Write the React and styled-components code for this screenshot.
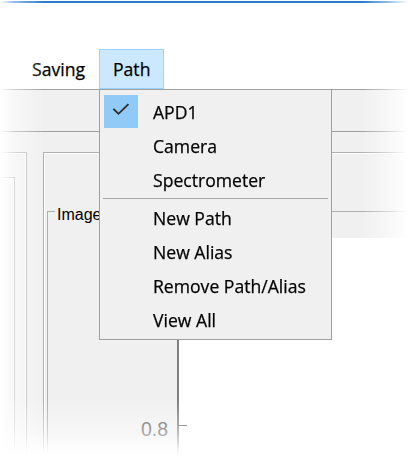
import React from 'react';
import styled, { createGlobalStyle } from 'styled-components';

const Global = createGlobalStyle`
  html, body { margin: 0; padding: 0; background: #ffffff; }
  body { width: 415px; height: 456px; overflow: hidden; }
`;

const FadeX = styled.div`
  width: 415px;
  height: 456px;
  overflow: hidden;
  -webkit-mask-image: linear-gradient(to right, transparent 0, rgba(0,0,0,0.5) 14px, #000 44px, #000 362px, rgba(0,0,0,0.5) 388px, transparent 408px);
  mask-image: linear-gradient(to right, transparent 0, rgba(0,0,0,0.5) 14px, #000 44px, #000 362px, rgba(0,0,0,0.5) 388px, transparent 408px);
`;

const FadeY = styled.div`
  height: 100%;
  display: flex;
  flex-direction: column;
  -webkit-mask-image: linear-gradient(to bottom, #000 0, #000 402px, rgba(0,0,0,0.55) 432px, transparent 454px);
  mask-image: linear-gradient(to bottom, #000 0, #000 402px, rgba(0,0,0,0.55) 432px, transparent 454px);
`;

const TopEdge = styled.div`
  height: 2px;
  margin-top: 1px;
  background: #2a7bd3;
  flex: none;
`;

const TitleArea = styled.div`
  height: 46px;
  flex: none;
  background: #fff;
`;

const MenuBar = styled.div`
  height: 40px;
  flex: none;
  display: flex;
  padding-left: 18px;
  background: #fff;
  font-family: "Open Sans", "Noto Sans", sans-serif;
  font-size: 17.6px;
  color: #000;
  -webkit-text-stroke: 0.25px #000;
  position: relative;
  z-index: 5;
`;

const MenuItem = styled.div`
  position: relative;
  box-sizing: border-box;
  height: 40px;
  padding: 0 13px;
  display: flex;
  align-items: center;
  border: 1px solid ${p => (p.$open ? '#99d1ff' : 'transparent')};
  background: ${p => (p.$open ? '#cce8ff' : 'transparent')};
  white-space: nowrap;
`;

const Dropdown = styled.div`
  position: absolute;
  top: calc(100% + 1px);
  left: -1px;
  width: 233px;
  box-sizing: border-box;
  border: 1px solid #a0a0a0;
  background: #f0f0f0;
  padding: 5px 2px 2px 2px;
  display: flex;
  flex-direction: column;
`;

const DropItem = styled.div`
  height: 34px;
  display: flex;
  align-items: center;
`;

const CheckCell = styled.div`
  width: 34px;
  height: 33px;
  margin-left: 2px;
  align-self: flex-start;
  background: ${p => (p.$on ? '#91c9f7' : 'transparent')};
  display: flex;
  flex: none;
`;

const ItemLabel = styled.span`
  margin-left: 15px;
`;

const Separator = styled.div`
  height: 4px;
  box-sizing: border-box;
  margin: 0 1px;
  padding-top: 1px;
  &::before {
    content: '';
    display: block;
    height: 1px;
    background: #a8a8a8;
  }
`;

const Toolbar = styled.div`
  height: 41px;
  flex: none;
  border-top: 1px solid #a0a0a0;
  border-bottom: 1px solid #a0a0a0;
  background: #f0f0f0;
`;

const TabStrip = styled.div`
  height: 20px;
  flex: none;
  background: #f0f0f0;
`;

const Workspace = styled.div`
  flex: 1;
  display: flex;
  background: #f0f0f0;
  min-height: 0;
`;

const SidePanel = styled.div`
  width: 26px;
  flex: none;
  border-top: 1px solid #b4b4b4;
  border-right: 1px solid #b4b4b4;
  box-shadow: inset -1px 1px 0 #fff;
  padding-top: 24px;
  display: flex;
`;

const InnerSide = styled.div`
  width: 14px;
  border-top: 1px solid #b4b4b4;
  border-right: 1px solid #b4b4b4;
  box-shadow: inset -1px 1px 0 #fff;
`;

const MainPanel = styled.div`
  flex: 1;
  margin-left: 16px;
  border-top: 1px solid #b0b0b0;
  border-left: 1px solid #b0b0b0;
  box-shadow: inset 1px 1px 0 #fff;
  padding: 46px 0 0 3px;
  display: flex;
  min-width: 0;
`;

const GroupBox = styled.fieldset`
  flex: 1;
  margin: 0;
  padding: 0;
  min-width: 0;
  border: 0;
  border-top: 1px solid #b0b0b0;
  border-left: 1px solid #b0b0b0;
`;

const Legend = styled.legend`
  margin-left: 7px;
  padding: 7px 2px 0;
  font-family: "Liberation Sans", Arial, sans-serif;
  font-size: 16px;
  line-height: 18px;
  color: #000;
`;

const Plot = styled.svg`
  display: block;
  margin-top: 14px;
  width: 100%;
  height: 230px;
`;

const pathItems = ['New Path', 'New Alias', 'Remove Path/Alias', 'View All'];
const devices = ['APD1', 'Camera', 'Spectrometer'];

export default function App() {
  return (
    <>
      <Global />
      <FadeX>
        <FadeY>
          <TopEdge />
          <TitleArea />
          <MenuBar>
            <MenuItem>Saving</MenuItem>
            <MenuItem $open>
              Path
              <Dropdown>
                {devices.map((d, i) => (
                  <DropItem key={d}>
                    <CheckCell $on={i === 0}>
                      {i === 0 && (
                        <svg width="34" height="33" viewBox="0 0 34 33">
                          <polyline points="10,14.5 14.5,18.8 23.8,9.8" fill="none" stroke="#2b2b2b" strokeWidth="1.8" strokeLinecap="square" />
                        </svg>
                      )}
                    </CheckCell>
                    <ItemLabel>{d}</ItemLabel>
                  </DropItem>
                ))}
                <Separator />
                {pathItems.map(d => (
                  <DropItem key={d}>
                    <CheckCell />
                    <ItemLabel>{d}</ItemLabel>
                  </DropItem>
                ))}
              </Dropdown>
            </MenuItem>
          </MenuBar>
          <Toolbar />
          <TabStrip />
          <Workspace>
            <SidePanel>
              <InnerSide />
            </SidePanel>
            <MainPanel>
              <GroupBox>
                <Legend>Image</Legend>
                <Plot>
                  <rect x="130.7" y="0" width="1000" height="230" fill="#ffffff" />
                  <line x1="130" y1="0" x2="130" y2="230" stroke="#505050" strokeWidth="1.4" />
                  <line x1="130" y1="187.5" x2="139" y2="187.5" stroke="#606060" strokeWidth="1" />
                  <text x="120" y="198" textAnchor="end" fontFamily="Liberation Sans, Arial, sans-serif" fontSize="19.5" fill="#5a5a5a">0.8</text>
                </Plot>
              </GroupBox>
            </MainPanel>
          </Workspace>
        </FadeY>
      </FadeX>
    </>
  );
}
